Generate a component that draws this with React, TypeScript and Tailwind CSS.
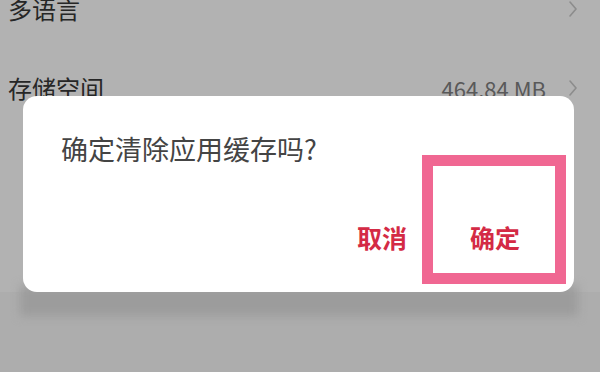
import React from 'react';

const font = { fontFamily: '"Noto Sans CJK SC", "Noto Sans", sans-serif' };

const Chevron: React.FC = () => (
  <svg width="10" height="18" viewBox="0 0 10 18" fill="none">
    <path d="M2 2l6 7-6 7" stroke="#8c8c8c" strokeWidth="1.6" strokeLinecap="round" strokeLinejoin="round" />
  </svg>
);

const App: React.FC = () => {
  return (
    <div className="relative w-[600px] h-[372px] overflow-hidden bg-[#adadad]" style={font}>
      <div className="flex flex-col bg-[#b2b2b2] h-[292px]">
        <div className="flex items-center justify-between h-[26px] -mt-[4px] pl-[8px] pr-[22px]">
          <span className="text-[24px] leading-none text-[#262626]">多语言</span>
          <Chevron />
        </div>
        <div className="flex items-center justify-between h-[30px] mt-[51px] pl-[8px] pr-[22px]">
          <span className="text-[24px] leading-none text-[#262626]">存储空间</span>
          <div className="flex items-center gap-[22px]">
            <span className="text-[22px] leading-none text-[#595959]">464.84 MB</span>
            <Chevron />
          </div>
        </div>
      </div>

      {/* shadow under dialog */}
      <div className="absolute left-[20px] top-[286px] w-[558px] h-[30px] bg-[#9c9c9c] blur-[5px]" />

      <div className="absolute left-[23px] top-[96px] w-[551px] h-[196px] bg-white rounded-[14px]">
        <div className="pt-[35px] pl-[38px] text-[27px] leading-[36px] text-[#444]">确定清除应用缓存吗?</div>
        <div className="absolute top-[125px] left-[334px] flex gap-[63px] text-[25px] font-bold leading-[32px] text-[#d42a45]">
          <span>取消</span>
          <span>确定</span>
        </div>
        <div className="absolute left-[399px] top-[59px] w-[144px] h-[129px] border-[11px] border-[#f06792]" />
      </div>
    </div>
  );
};

export default App;
